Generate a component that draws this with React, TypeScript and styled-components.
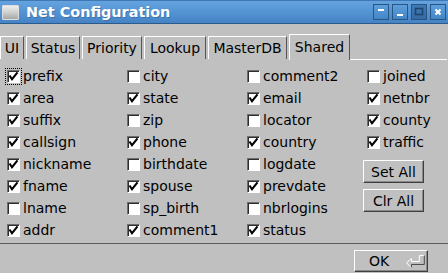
import React from "react";
import styled, { createGlobalStyle } from "styled-components";

const Global = createGlobalStyle`
  *, *::before, *::after { box-sizing: border-box; }
  html, body { margin: 0; padding: 0; background: #c0c0c0; }
  body { font-family: "DejaVu Sans", "Liberation Sans", sans-serif; font-size: 14px; color: #000; }
`;

const Window = styled.div`
  width: 448px;
  height: 273px;
  display: flex;
  flex-direction: column;
  background: #c0c0c0;
  overflow: hidden;
`;

const TitleBar = styled.div`
  flex: none;
  height: 24px;
  display: flex;
  align-items: center;
  padding: 0 2px 0 2px;
  background: linear-gradient(#64a3e0, #4583c5);
  border-top: 1px solid #3f78b3;
  border-bottom: 1px solid #2b5b8d;
`;

const AppIcon = styled.span`
  width: 17px;
  height: 15px;
  border: 1px solid #dedede;
  border-radius: 1px;
  background: linear-gradient(#ededed 0%, #d2d2d2 45%, #a7a7a7 100%);
`;

const Title = styled.span`
  margin-left: 7px;
  color: #fff;
  font-weight: bold;
  font-size: 14.4px;
  text-shadow: 1px 1px 0 rgba(0, 0, 0, 0.2);
`;

const WinButtons = styled.div`
  margin-left: auto;
  display: flex;
  gap: 3px;
`;

const WinButton = styled.div<{ $dark?: boolean }>`
  width: 16px;
  height: 16px;
  border: 1px solid #275584;
  background: ${(p) => (p.$dark ? "linear-gradient(#3f7ab6, #336aa3)" : "linear-gradient(#5e9edc, #4485c7)")};
  display: flex;
  svg { display: block; }
`;

const TabArea = styled.div`
  flex: none;
  padding-top: 10px;
  display: flex;
  align-items: flex-start;
  height: 36px;
`;

const Tab = styled.div<{ $active?: boolean; $w: number }>`
  width: ${(p) => p.$w}px;
  flex: none;
  margin-right: 2px;
  margin-top: ${(p) => (p.$active ? 0 : 2)}px;
  height: ${(p) => (p.$active ? 26 : 23)}px;
  padding-bottom: ${(p) => (p.$active ? 2 : 1)}px;
  display: flex;
  align-items: center;
  justify-content: center;
  border-top: 1px solid #fff;
  border-left: 1px solid #fff;
  border-right: 1px solid #555;
  background: #c0c0c0;
  white-space: nowrap;
`;

const TabFill = styled.div`
  flex: 1;
  height: 26px;
  margin-left: -2px;
  margin-right: 1px;
  border-bottom: 1px solid #fff;
`;

const Panel = styled.div`
  flex: none;
  height: 184px;
  padding: 5px 0 0 7px;
  display: flex;
  border-bottom: 1px solid #5a5a5a;
`;

const Column = styled.div`
  width: 120px;
  flex: none;
  display: flex;
  flex-direction: column;
`;

const Row = styled.label`
  height: 22px;
  display: flex;
  align-items: center;
  gap: 3px;
  white-space: nowrap;
`;

const Box = styled.span<{ $focus?: boolean }>`
  width: 13px;
  height: 13px;
  flex: none;
  background: #fff;
  border: 1px solid;
  border-color: #6e6e6e #fff #fff #6e6e6e;
  box-shadow: inset 1px 1px 0 #2e2e2e;
  outline: ${(p) => (p.$focus ? "1px dotted #000" : "none")};
  outline-offset: 1px;
  display: flex;
  svg { display: block; }
`;

const ButtonGroup = styled.div`
  margin-top: 7px;
  margin-left: -4px;
  display: flex;
  flex-direction: column;
  gap: 6px;
`;

const Button = styled.button`
  width: 61px;
  height: 23px;
  padding: 0;
  font: inherit;
  color: #000;
  background: #c0c0c0;
  border: 1px solid;
  border-color: #fff #3f3f3f #3f3f3f #fff;
  box-shadow: inset -1px -1px 0 #8a8a8a;
  display: flex;
  align-items: center;
  justify-content: center;
`;

const Footer = styled.div`
  flex: 1;
  display: flex;
  justify-content: flex-end;
  padding: 6px 20px 0 0;
`;

const OkButton = styled(Button)`
  width: 74px;
  height: 22px;
  justify-content: flex-start;
  padding-left: 14px;
  gap: 16px;
`;

const Check = () => (
  <svg width="11" height="11" viewBox="0 0 11 11">
    <path d="M1.5 4.5 L4 8.2 L9.5 1.3" fill="none" stroke="#000" strokeWidth="2" />
  </svg>
);

type Item = { label: string; on: boolean };

const columns: Item[][] = [
  [
    { label: "prefix", on: true },
    { label: "area", on: true },
    { label: "suffix", on: true },
    { label: "callsign", on: true },
    { label: "nickname", on: true },
    { label: "fname", on: true },
    { label: "lname", on: false },
    { label: "addr", on: true },
  ],
  [
    { label: "city", on: false },
    { label: "state", on: true },
    { label: "zip", on: false },
    { label: "phone", on: true },
    { label: "birthdate", on: false },
    { label: "spouse", on: true },
    { label: "sp_birth", on: false },
    { label: "comment1", on: true },
  ],
  [
    { label: "comment2", on: false },
    { label: "email", on: true },
    { label: "locator", on: false },
    { label: "country", on: true },
    { label: "logdate", on: false },
    { label: "prevdate", on: true },
    { label: "nbrlogins", on: false },
    { label: "status", on: true },
  ],
  [
    { label: "joined", on: false },
    { label: "netnbr", on: true },
    { label: "county", on: true },
    { label: "traffic", on: true },
  ],
];

const tabs = [
  { label: "UI", w: 24 },
  { label: "Status", w: 54 },
  { label: "Priority", w: 60 },
  { label: "Lookup", w: 62 },
  { label: "MasterDB", w: 79 },
  { label: "Shared", w: 61, active: true },
];

const CheckRow = ({ item, focus }: { item: Item; focus?: boolean }) => (
  <Row>
    <Box $focus={focus}>{item.on && <Check />}</Box>
    {item.label}
  </Row>
);

export default function App() {
  return (
    <>
      <Global />
      <Window>
        <TitleBar>
          <AppIcon />
          <Title>Net Configuration</Title>
          <WinButtons>
            <WinButton>
              <svg width="14" height="14" viewBox="0 0 14 14">
                <rect x="4" y="4" width="6" height="2" fill="#fff" />
              </svg>
            </WinButton>
            <WinButton>
              <svg width="14" height="14" viewBox="0 0 14 14">
                <rect x="4" y="9" width="6" height="2" fill="#fff" />
              </svg>
            </WinButton>
            <WinButton $dark>
              <svg width="14" height="14" viewBox="0 0 14 14">
                <rect x="3.5" y="3.5" width="7" height="6" fill="none" stroke="#1f4470" strokeWidth="1.6" />
              </svg>
            </WinButton>
            <WinButton>
              <svg width="14" height="14" viewBox="0 0 14 14">
                <path d="M4.5 4.5 L9.5 9.5 M9.5 4.5 L4.5 9.5" stroke="#fff" strokeWidth="2" />
              </svg>
            </WinButton>
          </WinButtons>
        </TitleBar>
        <TabArea>
          {tabs.map((t) => (
            <Tab key={t.label} $w={t.w} $active={t.active}>
              {t.label}
            </Tab>
          ))}
          <TabFill />
        </TabArea>
        <Panel>
          {columns.map((col, ci) => (
            <Column key={ci}>
              {col.map((item, ri) => (
                <CheckRow key={item.label} item={item} focus={ci === 0 && ri === 0} />
              ))}
              {ci === 3 && (
                <ButtonGroup>
                  <Button>Set All</Button>
                  <Button>Clr All</Button>
                </ButtonGroup>
              )}
            </Column>
          ))}
        </Panel>
        <Footer>
          <OkButton>
            OK
            <svg width="22" height="15" viewBox="0 0 22 15">
              <polyline points="6.5,13.5 1.5,9 6.5,4.5 6.5,7.5 14.5,7.5 14.5,1.5 19.5,1.5" fill="none" stroke="#fff" strokeWidth="1" />
              <polyline points="19.5,1.5 19.5,10.5 6.5,10.5 6.5,13.5" fill="none" stroke="#4a4a4a" strokeWidth="1" />
            </svg>
          </OkButton>
        </Footer>
      </Window>
    </>
  );
}
